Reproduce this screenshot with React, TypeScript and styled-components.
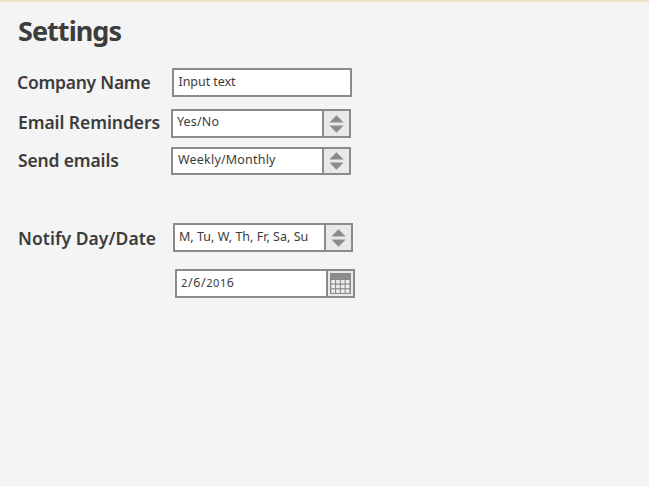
import React from "react";
import styled, { createGlobalStyle } from "styled-components";

const GlobalStyle = createGlobalStyle`
  * { box-sizing: border-box; }
  body { margin: 0; background: #f4f4f4; font-family: "Noto Sans", "Open Sans", sans-serif; color: #3c3c3c; }
`;

const Page = styled.main`
  height: 486px;
  overflow: hidden;
  border-top: 1px solid #e6e0dc;
`;

const Accent = styled.div`
  height: 1px;
  background: #ffe6b4;
`;

const Title = styled.h1`
  margin: 10px 0 0 18px;
  height: 37px;
  line-height: 37px;
  font-size: 27px;
  font-weight: 700;
  letter-spacing: -0.95px;
`;

const Row = styled.div<{ $gap: number; $height?: number }>`
  display: flex;
  margin-top: ${(p) => p.$gap}px;
  height: ${(p) => p.$height ?? 29}px;
`;

const Label = styled.label<{ $width: number; $inset?: number; $tracking?: number; $line?: number }>`
  flex: none;
  width: ${(p) => p.$width}px;
  padding-left: ${(p) => p.$inset ?? 18}px;
  line-height: ${(p) => p.$line ?? 28}px;
  font-size: 17.5px;
  font-weight: 600;
  white-space: nowrap;
  letter-spacing: ${(p) => p.$tracking ?? 0}px;
`;

const Field = styled.div`
  display: flex;
  width: 180px;
  height: 100%;
  border: 2px solid #8b8b8b;
  background: #fff;
`;

const Value = styled.span<{ $inset?: number; $tracking?: number; $line?: number }>`
  flex: 1;
  padding-left: ${(p) => p.$inset ?? 4}px;
  line-height: ${(p) => p.$line ?? 22}px;
  font-size: 12.5px;
  white-space: nowrap;
  letter-spacing: ${(p) => p.$tracking ?? 0}px;
`;

const LowFigure = styled.span`
  font-size: 11px;
`;

const Addon = styled.span`
  display: flex;
  flex: none;
  align-items: center;
  justify-content: center;
  width: 27px;
  border-left: 2px solid #8b8b8b;
  background: #e9e9e9;
`;

const Stepper = () => (
  <Addon>
    <svg width="15" height="18" viewBox="0 0 15 18" fill="#8b8b8b">
      <path d="M7.5 0.3 14.6 7.6H0.4Z" />
      <path d="M0.4 10.4H14.6L7.5 17.7Z" />
    </svg>
  </Addon>
);

const Calendar = () => (
  <Addon>
    <svg width="21" height="21" viewBox="0 0 21 21">
      <path fill="#8b8b8b" d="M0 0H21V21H0Z" />
      {[7, 11.7, 16.4].map((y) =>
        [1.3, 6.1, 10.9, 15.7].map((x) => (
          <rect key={`${x}-${y}`} x={x} y={y} width="3.7" height="3.5" fill="#ededed" />
        ))
      )}
    </svg>
  </Addon>
);

export default function App() {
  return (
    <>
      <GlobalStyle />
      <Page>
        <Accent />
        <Title>Settings</Title>
        <Row $gap={19}>
          <Label $width={172} $inset={17} $tracking={-0.25} $line={29}>Company Name</Label>
          <Field><Value $inset={4.5} $tracking={-0.05} $line={24}>Input text</Value></Field>
        </Row>
        <Row $gap={12}>
          <Label $width={171} $tracking={-0.07} $line={27}>Email Reminders</Label>
          <Field><Value $tracking={0.15}>Yes/No</Value><Stepper /></Field>
        </Row>
        <Row $gap={9} $height={28}>
          <Label $width={171} $tracking={-0.15} $line={27}>Send emails</Label>
          <Field><Value $inset={5} $tracking={0.2}>Weekly/Monthly</Value><Stepper /></Field>
        </Row>
        <Row $gap={48}>
          <Label $width={173} $tracking={0.05} $line={30}>Notify Day/Date</Label>
          <Field><Value $tracking={0.02} $line={24}>M, Tu, W, Th, Fr, Sa, Su</Value><Stepper /></Field>
        </Row>
        <Row $gap={17}>
          <Label $width={175} />
          <Field>
            <Value $inset={4} $tracking={0.6} $line={24}>
              <LowFigure>2</LowFigure>/6/<LowFigure>201</LowFigure>6
            </Value>
            <Calendar />
          </Field>
        </Row>
      </Page>
    </>
  );
}
